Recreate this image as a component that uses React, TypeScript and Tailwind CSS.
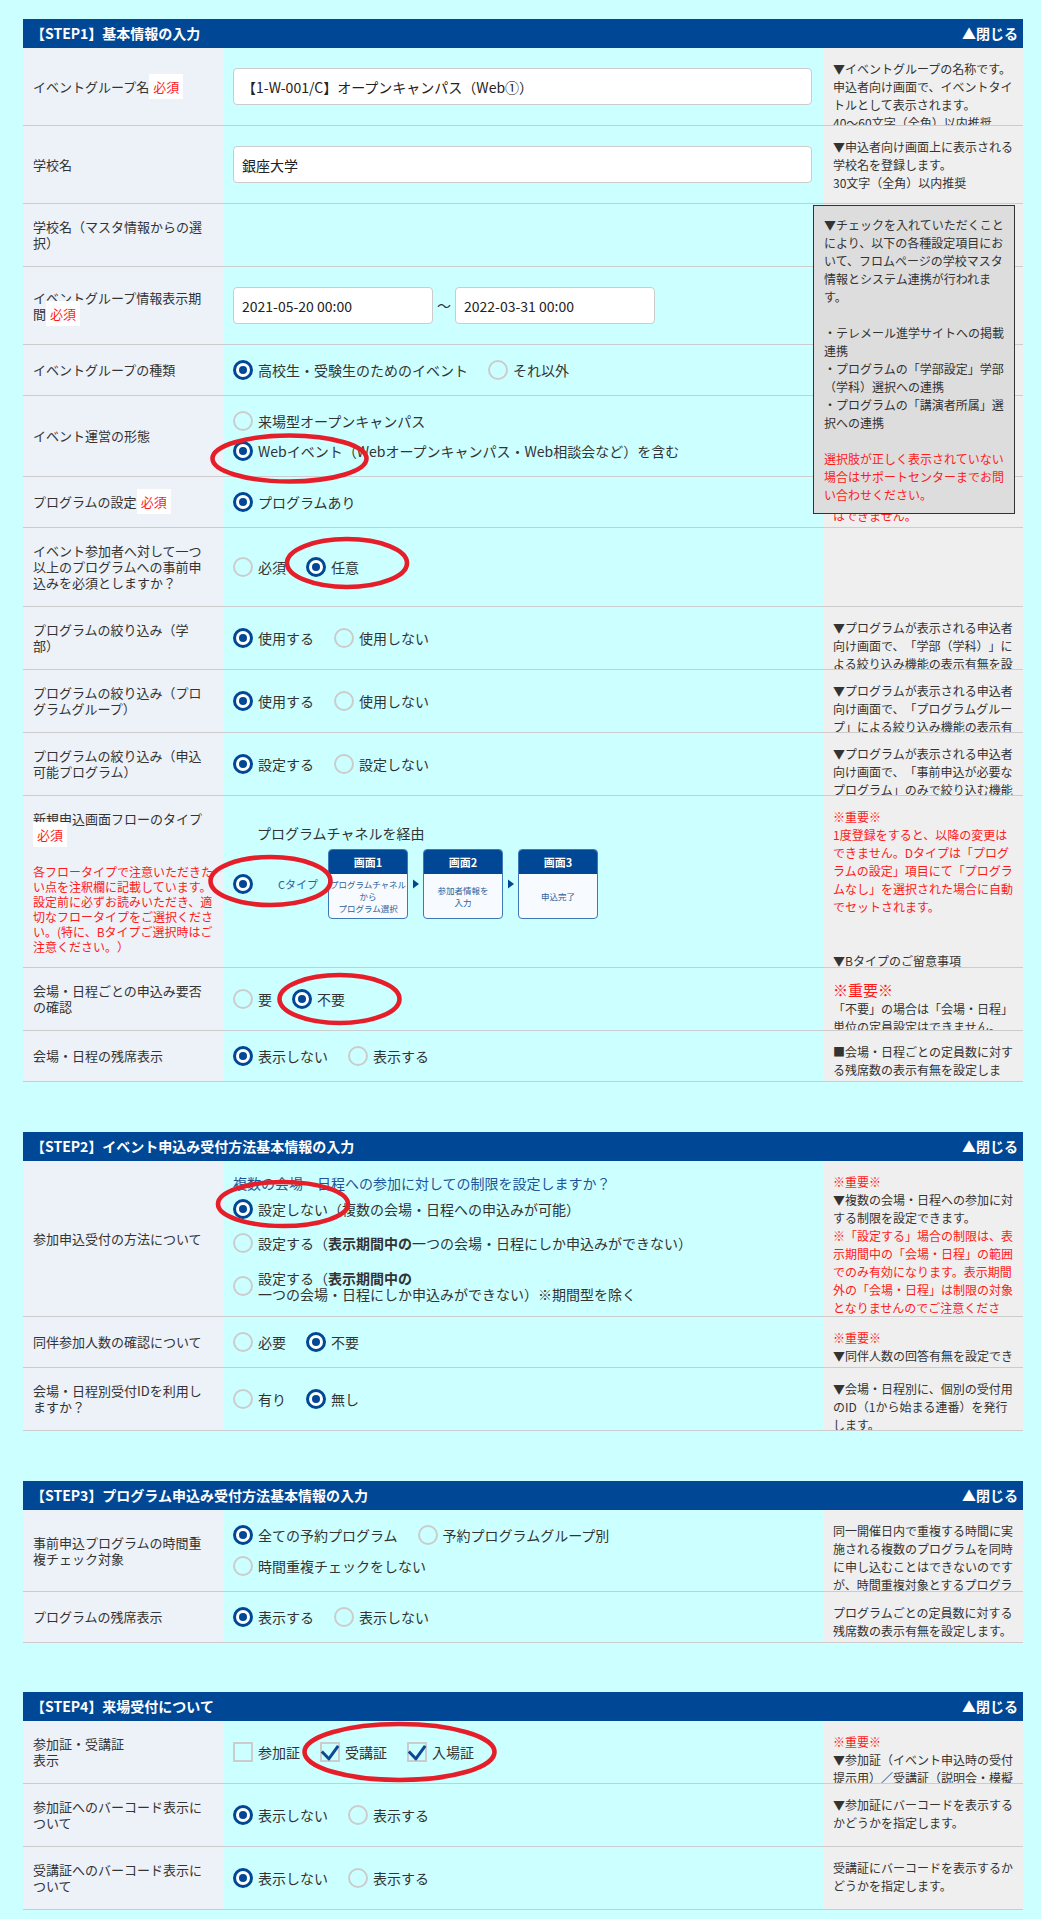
import React from 'react';

type RowProps = {
  label: React.ReactNode;
  note?: React.ReactNode;
  children?: React.ReactNode;
  body?: string;
};

const Row = ({ label, note, children, body = 'items-center py-[15px]' }: RowProps) => (
  <div className="grid grid-cols-[200px_600px_200px] border-b border-[#cccccc]">
    <div className="flex items-center bg-[#edf1f8] px-[10px] py-[15px] text-[13px] leading-4 text-[#333333]">
      <div>{label}</div>
    </div>
    <div className={`flex px-[10px] ${body}`}>{children}</div>
    <div className="overflow-hidden bg-[#efefef] px-[10px] pt-3 text-[12px] leading-[18px] text-[#333333] [contain:size]">
      {note}
    </div>
  </div>
);

const Badge = () => (
  <span className="bg-white px-1 py-[3px] text-[13px] text-[#ff1a1a]">必須</span>
);

const Red = ({ children }: { children: React.ReactNode }) => (
  <span className="text-[#ff1a1a]">{children}</span>
);

const Dot = ({ checked }: { checked?: boolean }) =>
  checked ? (
    <span className="flex h-5 w-5 shrink-0 items-center justify-center rounded-full border-[3px] border-[#004896] bg-white">
      <span className="h-2 w-2 rounded-full bg-[#004896]" />
    </span>
  ) : (
    <span className="h-5 w-5 shrink-0 rounded-full border-2 border-[#cccccc]" />
  );

const Radio = ({ checked, children }: { checked?: boolean; children: React.ReactNode }) => (
  <label className="flex items-center gap-[5px] text-[14px] leading-5 text-[#333333]">
    <Dot checked={checked} />
    <span>{children}</span>
  </label>
);

const Check = ({ checked, children }: { checked?: boolean; children: React.ReactNode }) => (
  <label className="flex items-center gap-[5px] text-[14px] leading-5 text-[#333333]">
    <span className="relative h-5 w-5 shrink-0 border-2 border-[#cccccc]">
      {checked && (
        <svg className="absolute -left-[2px] -top-[2px] overflow-visible" width="20" height="20" viewBox="0 0 20 20">
          <path d="M1.8 9.5 L8.8 16.8 L18.2 3.8" fill="none" stroke="#0b4a93" strokeWidth="3" strokeLinejoin="round" />
        </svg>
      )}
    </span>
    <span>{children}</span>
  </label>
);

const Field = ({ value, className }: { value: string; className: string }) => (
  <input
    readOnly
    value={value}
    className={`h-[37px] rounded-[4px] border border-[#cccccc] bg-white px-2 text-[14px] text-[#222222] outline-none ${className}`}
  />
);

const Section = ({ title, children, className = '' }: { title: string; children: React.ReactNode; className?: string }) => (
  <section className={`relative w-[1000px] ${className}`}>
    <div className="flex h-[29px] items-center justify-between bg-[#004896] pl-2 pr-[5px] text-[14px] font-bold text-white">
      <span>{title}</span>
      <span>▲閉じる</span>
    </div>
    {children}
  </section>
);

const FlowBox = ({ title, children }: { title: string; children: React.ReactNode }) => (
  <div className="flex h-[70px] w-20 flex-col overflow-hidden rounded-[4px] border border-[#3f78b8] bg-[#f7fbff]">
    <div className="flex h-6 shrink-0 items-center justify-center bg-[#004896] text-[11px] font-bold text-white">{title}</div>
    <div className="flex flex-1 items-center justify-center whitespace-nowrap text-center text-[8.5px] leading-3 text-[#2d5f9a]">
      <div>{children}</div>
    </div>
  </div>
);

const Arrow = () => (
  <span className="flex w-[15px] justify-center">
    <svg width="15" height="12" viewBox="0 0 15 12">
      <path d="M5 1.5 L11 6 L5 10.5Z" fill="#004896" />
    </svg>
  </span>
);

const rings = [
  { cx: 289.5, cy: 458.5, rx: 77, ry: 23 },
  { cx: 347, cy: 563, rx: 60, ry: 24 },
  { cx: 270.5, cy: 881, rx: 60, ry: 24 },
  { cx: 339.5, cy: 999, rx: 60, ry: 24 },
  { cx: 283, cy: 1204, rx: 65, ry: 22 },
  { cx: 399.5, cy: 1752, rx: 95, ry: 28 },
];

export default function App() {
  return (
    <div className="relative min-h-[1919px] bg-[#ccffff] pb-[9px] pl-[23px] pt-[19px] font-['Noto_Sans_CJK_JP',sans-serif] [text-spacing-trim:space-all]">
      <Section title="【STEP1】基本情報の入力">
        <Row
          label={<>イベントグループ名<Badge /></>}
          body="items-center py-5"
          note={<>▼イベントグループの名称です。<br />申込者向け画面で、イベントタイトルとして表示されます。<br />40～60文字（全角）以内推奨</>}
        >
          <Field value="【1-W-001/C】オープンキャンパス（Web①）" className="w-[579px]" />
        </Row>
        <Row
          label="学校名"
          body="items-center py-5"
          note={<>▼申込者向け画面上に表示される学校名を登録します。<br />30文字（全角）以内推奨</>}
        >
          <Field value="銀座大学" className="w-[579px]" />
        </Row>
        <Row label="学校名（マスタ情報からの選択）" note="" />
        <Row
          label={<>イベントグループ情報表示期間<Badge /></>}
          body="items-center py-5"
          note="▼申込者向け画面にイベントグループ情報を表示する期間です。"
        >
          <Field value="2021-05-20 00:00" className="w-[200px]" />
          <span className="mx-1 text-[14px] text-[#333333]">～</span>
          <Field value="2022-03-31 00:00" className="w-[200px]" />
        </Row>
        <Row label="イベントグループの種類" note="▼イベントグループの種類を選択します。">
          <div className="flex gap-5">
            <Radio checked>高校生・受験生のためのイベント</Radio>
            <Radio>それ以外</Radio>
          </div>
        </Row>
        <Row label="イベント運営の形態" note="▼イベントの開催形態を選択してください。">
          <div className="flex flex-col gap-[10px]">
            <Radio>来場型オープンキャンパス</Radio>
            <Radio checked>Webイベント（Webオープンキャンパス・Web相談会など）を含む</Radio>
          </div>
        </Row>
        <Row
          label={<>プログラムの設定<Badge /></>}
          note={<Red>※登録後のプログラム設定の変更はできません。</Red>}
        >
          <Radio checked>プログラムあり</Radio>
        </Row>
        <Row label="イベント参加者へ対して一つ以上のプログラムへの事前申込みを必須としますか？" note="">
          <div className="flex gap-5">
            <Radio>必須</Radio>
            <Radio checked>任意</Radio>
          </div>
        </Row>
        <Row
          label="プログラムの絞り込み（学部）"
          note="▼プログラムが表示される申込者向け画面で、「学部（学科）」による絞り込み機能の表示有無を設定します。"
        >
          <div className="flex gap-5">
            <Radio checked>使用する</Radio>
            <Radio>使用しない</Radio>
          </div>
        </Row>
        <Row
          label="プログラムの絞り込み（プログラムグループ）"
          note="▼プログラムが表示される申込者向け画面で、「プログラムグループ」による絞り込み機能の表示有無を設定します。"
        >
          <div className="flex gap-5">
            <Radio checked>使用する</Radio>
            <Radio>使用しない</Radio>
          </div>
        </Row>
        <Row
          label="プログラムの絞り込み（申込可能プログラム）"
          note="▼プログラムが表示される申込者向け画面で、「事前申込が必要なプログラム」のみで絞り込む機能の表示有無を設定します。"
        >
          <div className="flex gap-5">
            <Radio checked>設定する</Radio>
            <Radio>設定しない</Radio>
          </div>
        </Row>
        <Row
          label={
            <>
              新規申込画面フローのタイプ<Badge />
              <div className="-mb-[2px] mt-[21px] text-[12px] leading-[15px] text-[#ff1a1a]">
                各フロータイプで注意いただきたい点を注釈欄に記載しています。設定前に必ずお読みいただき、適切なフロータイプをご選択ください。(特に、Bタイプご選択時はご注意ください。）
              </div>
            </>
          }
          body="items-start pt-[27px]"
          note={
            <>
              <Red>※重要※<br />1度登録をすると、以降の変更はできません。Dタイプは「プログラムの設定」項目にて「プログラムなし」を選択された場合に自動でセットされます。</Red>
              <br />
              <br />
              <br />
              ▼Bタイプのご留意事項
            </>
          }
        >
          <div className="flex flex-col">
            <div className="ml-[24px] text-[14px] leading-5 text-[#333333]">プログラムチャネルを経由</div>
            <div className="mt-[6px] flex items-center">
              <Dot checked />
              <span className="ml-[25px] mr-[10px] text-[11px] text-[#2d5f9a]">Cタイプ</span>
              <FlowBox title="画面1">
                プログラムチャネル<br />から<br />プログラム選択
              </FlowBox>
              <Arrow />
              <FlowBox title="画面2">
                参加者情報を<br />入力
              </FlowBox>
              <Arrow />
              <FlowBox title="画面3">申込完了</FlowBox>
            </div>
          </div>
        </Row>
        <Row
          label="会場・日程ごとの申込み要否の確認"
          note={
            <>
              <span className="text-[15px] leading-5 text-[#ff1a1a]">※重要※</span>
              <br />
              「不要」の場合は「会場・日程」単位の定員設定はできません。
            </>
          }
        >
          <div className="flex gap-5">
            <Radio>要</Radio>
            <Radio checked>不要</Radio>
          </div>
        </Row>
        <Row label="会場・日程の残席表示" note="■会場・日程ごとの定員数に対する残席数の表示有無を設定します。">
          <div className="flex gap-5">
            <Radio checked>表示しない</Radio>
            <Radio>表示する</Radio>
          </div>
        </Row>

        <div className="absolute left-[790px] top-[186px] w-[202px] border border-[#333333] bg-[#dddddd] px-[10px] pb-[9px] pt-[10px] text-[12px] leading-[18px] text-[#333333]">
          ▼チェックを入れていただくことにより、以下の各種設定項目において、フロムページの学校マスタ情報とシステム連携が行われます。
          <br />
          <br />
          ・テレメール進学サイトへの掲載連携
          <br />
          ・プログラムの「学部設定」学部（学科）選択への連携
          <br />
          ・プログラムの「講演者所属」選択への連携
          <br />
          <br />
          <Red>選択肢が正しく表示されていない場合はサポートセンターまでお問い合わせください。</Red>
        </div>
      </Section>

      <Section title="【STEP2】イベント申込み受付方法基本情報の入力" className="mt-[50px]">
        <Row
          label="参加申込受付の方法について"
          body="items-start pt-[12px] pb-[14px]"
          note={
            <>
              <Red>※重要※</Red>
              <br />
              ▼複数の会場・日程への参加に対する制限を設定できます。
              <br />
              <Red>※「設定する」場合の制限は、表示期間中の「会場・日程」の範囲でのみ有効になります。表示期間外の「会場・日程」は制限の対象となりませんのでご注意ください。</Red>
            </>
          }
        >
          <div className="flex flex-col">
            <div className="text-[14px] leading-5 text-[#1d5598]">複数の会場・日程への参加に対しての制限を設定しますか？</div>
            <div className="mt-[6px]">
              <Radio checked>設定しない（複数の会場・日程への申込みが可能）</Radio>
            </div>
            <div className="mt-[14px]">
              <Radio>
                設定する（<b>表示期間中の</b>一つの会場・日程にしか申込みができない）
              </Radio>
            </div>
            <div className="mt-[17px]">
              <Radio>
                <span className="block leading-4">
                  設定する（<b>表示期間中の</b>
                  <br />
                  一つの会場・日程にしか申込みができない）※期間型を除く
                </span>
              </Radio>
            </div>
          </div>
        </Row>
        <Row
          label="同伴参加人数の確認について"
          note={<><Red>※重要※</Red><br />▼同伴人数の回答有無を設定できます。</>}
        >
          <div className="flex gap-5">
            <Radio>必要</Radio>
            <Radio checked>不要</Radio>
          </div>
        </Row>
        <Row label="会場・日程別受付IDを利用しますか？" note="▼会場・日程別に、個別の受付用のID（1から始まる連番）を発行します。">
          <div className="flex gap-5">
            <Radio>有り</Radio>
            <Radio checked>無し</Radio>
          </div>
        </Row>
      </Section>

      <Section title="【STEP3】プログラム申込み受付方法基本情報の入力" className="mt-[50px]">
        <Row
          label="事前申込プログラムの時間重複チェック対象"
          note="同一開催日内で重複する時間に実施される複数のプログラムを同時に申し込むことはできないのですが、時間重複対象とするプログラムを選択します。"
        >
          <div className="flex flex-col gap-[11px]">
            <div className="flex gap-5">
              <Radio checked>全ての予約プログラム</Radio>
              <Radio>予約プログラムグループ別</Radio>
            </div>
            <Radio>時間重複チェックをしない</Radio>
          </div>
        </Row>
        <Row label="プログラムの残席表示" note="プログラムごとの定員数に対する残席数の表示有無を設定します。">
          <div className="flex gap-5">
            <Radio checked>表示する</Radio>
            <Radio>表示しない</Radio>
          </div>
        </Row>
      </Section>

      <Section title="【STEP4】来場受付について" className="mt-[49px]">
        <Row
          label={<>参加証・受講証<br />表示</>}
          note={
            <>
              <Red>※重要※</Red>
              <br />
              ▼参加証（イベント申込時の受付提示用）／受講証（説明会・模擬授業等の受付提示用）の表示を設定します。
            </>
          }
        >
          <div className="flex gap-5">
            <Check>参加証</Check>
            <Check checked>受講証</Check>
            <Check checked>入場証</Check>
          </div>
        </Row>
        <Row label="参加証へのバーコード表示について" note="▼参加証にバーコードを表示するかどうかを指定します。">
          <div className="flex gap-5">
            <Radio checked>表示しない</Radio>
            <Radio>表示する</Radio>
          </div>
        </Row>
        <Row label="受講証へのバーコード表示について" note="受講証にバーコードを表示するかどうかを指定します。">
          <div className="flex gap-5">
            <Radio checked>表示しない</Radio>
            <Radio>表示する</Radio>
          </div>
        </Row>
      </Section>

      <svg className="pointer-events-none absolute left-0 top-0" width="1041" height="1919" viewBox="0 0 1041 1919">
        {rings.map((r, i) => (
          <ellipse key={i} cx={r.cx} cy={r.cy} rx={r.rx} ry={r.ry} fill="none" stroke="#e61e2a" strokeWidth="4.6" />
        ))}
      </svg>
    </div>
  );
}
